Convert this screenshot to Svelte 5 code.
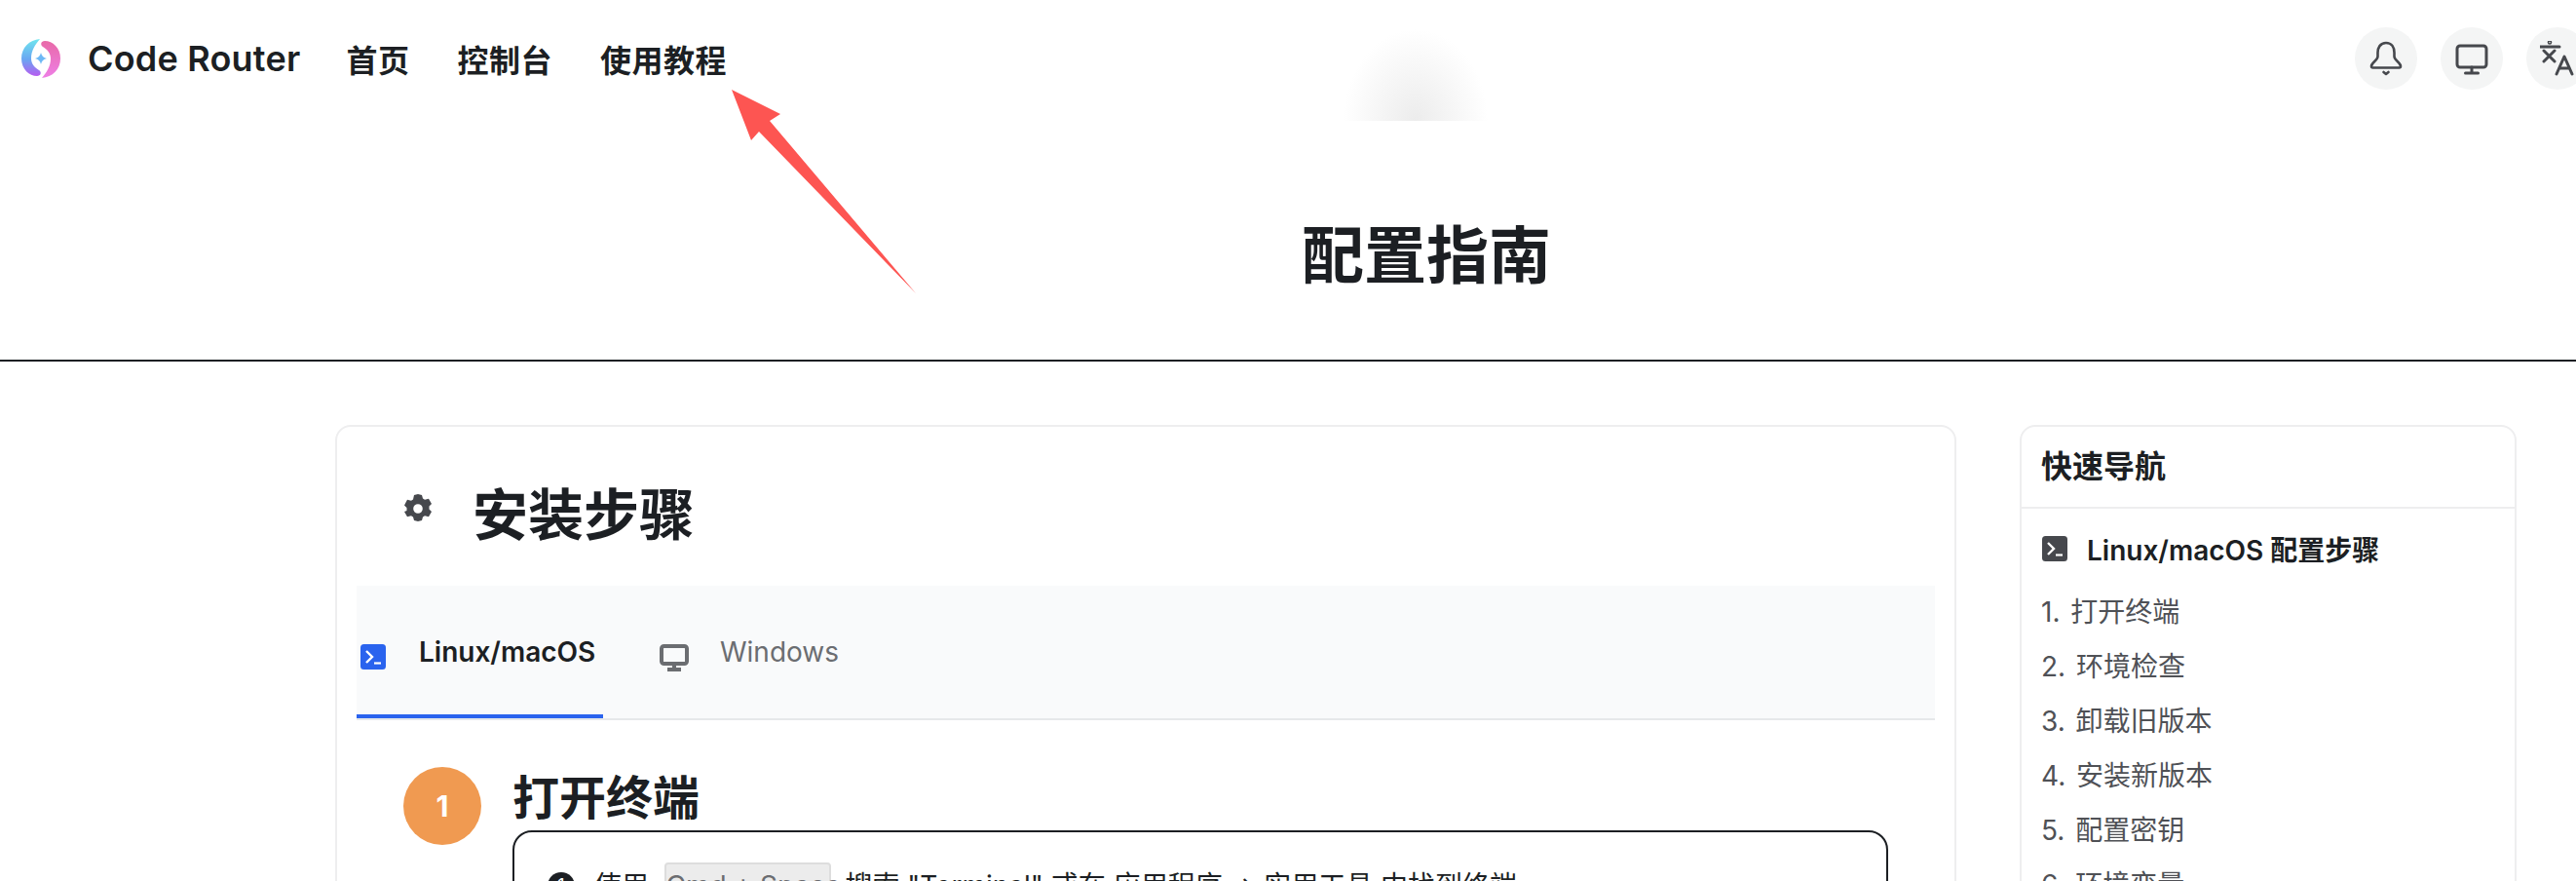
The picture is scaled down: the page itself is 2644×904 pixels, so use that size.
<script lang="ts">
  const nav = ['首页', '控制台', '使用教程'];
  const steps = ['打开终端', '环境检查', '卸载旧版本', '安装新版本', '配置密钥', '环境变量'];
</script>

{#snippet terminal(cls: string)}
  <svg class={cls} viewBox="0 0 26 26">
    <rect width="26" height="26" rx="3.5" fill="currentColor" />
    <path d="M6 7l6 6-6 6" fill="none" stroke="#fff" stroke-width="2.4" />
    <path d="M14 19.5h7" fill="none" stroke="#fff" stroke-width="2.2" />
  </svg>
{/snippet}

<div class="page">
  <header class="topbar">
    <svg class="logo" viewBox="0 0 40 40">
      <defs>
        <linearGradient id="lg-left" x1="0.5" y1="0" x2="0.5" y2="1">
          <stop offset="0" stop-color="#6fe6ee" />
          <stop offset="0.55" stop-color="#6aa6f2" />
          <stop offset="1" stop-color="#b65cf0" />
        </linearGradient>
        <linearGradient id="lg-right" x1="0.5" y1="0" x2="0.5" y2="1">
          <stop offset="0" stop-color="#e86aa8" />
          <stop offset="1" stop-color="#ee7fe6" />
        </linearGradient>
      </defs>
      <path fill="url(#lg-left)" d="M19 0C8 1 0 9 0 20c0 11 8 18 16 18 4 0 5-4 2-6-5-3-8-7-8-12C10 12 14 6 19 0z" />
      <path fill="url(#lg-right)" d="M21 40c11-1 19-9 19-20C40 9 32 2 24 2c-4 0-5 4-2 6 5 3 8 7 8 12 0 8-4 14-9 20z" />
      <path fill="#6db8f5" d="M20 14q1 5 6 6-5 1-6 6-1-5-6-6 5-1 6-6z" />
    </svg>
    <span class="brand">Code Router</span>
    <nav class="nav">
      {#each nav as item}
        <a href="#top">{item}</a>
      {/each}
    </nav>
    <div class="actions">
      <button aria-label="通知">
        <svg width="36" height="36" viewBox="0 0 36 36" fill="none" stroke="currentColor" stroke-width="2.6" stroke-linejoin="round" stroke-linecap="round">
          <path d="M18 2c-6 0-8.500 5-8.500 10v4c0 4-6.500 6-6.500 10 0 1 .5 1.500 1.500 1.500h27c1 0 1.500-.5 1.500-1.500 0-4-6.500-6-6.500-10v-4C26.500 7 24 2 18 2z" />
          <path d="M15.500 32l2.500 2 2.500-2" />
        </svg>
      </button>
      <button aria-label="主题">
        <svg width="36" height="36" viewBox="0 0 36 36" fill="none" stroke="currentColor" stroke-width="3" stroke-linejoin="round" stroke-linecap="round">
          <rect x="3" y="5" width="30" height="22" rx="3" />
          <path d="M18 27v6M11.500 33h13" />
        </svg>
      </button>
      <button aria-label="语言">
        <svg width="36" height="36" viewBox="0 0 36 36" fill="none" stroke="currentColor" stroke-width="3" stroke-linejoin="round" stroke-linecap="round">
          <path d="M0 6h20M4 10l11 11M15 10L4 21" />
          <circle cx="10" cy="1.500" r="0.800" />
          <path d="M17 34l8-18 8 18M20 28h10" />
        </svg>
      </button>
    </div>
  </header>

  <section class="hero">
    <h1>配置指南</h1>
  </section>

  <main class="content">
    <article class="card">
      <div class="card-title">
        <svg class="gear" viewBox="0 0 28 30">
          <path fill-rule="evenodd" fill="currentColor" d="M14 0l4 1 1 3.500 2 1.200 4-1 3 5.300-2.500 2.500v3l2.500 2.500-3 5.300-4-1-2 1.200-1 3.500-4 1-4-1-1-3.500-2-1.200-4 1-3-5.300L2.500 17v-3L0 11.500 3 5.700l4 1 2-1.200L10 1zm0 10.200a4.800 4.800 0 100 9.600 4.800 4.800 0 000-9.600z" />
        </svg>
        <h2>安装步骤</h2>
      </div>

      <div class="tabs">
        <div class="tab active">
          {@render terminal('tab-icon')}
          <span>Linux/macOS</span>
        </div>
        <div class="tab">
          <svg class="tab-icon" viewBox="0 0 30 28" fill="none" stroke="currentColor">
            <rect x="2" y="2" width="26" height="18" rx="2.500" stroke-width="4" />
            <path d="M15 21v4M8 26h14" stroke-width="4" />
          </svg>
          <span>Windows</span>
        </div>
      </div>

      <div class="step">
        <span class="badge">1</span>
        <div class="step-body">
          <h3>打开终端</h3>
          <div class="step-box">
            <p>
              <span class="dot">1</span>
              使用 <kbd>Cmd + Space</kbd> 搜索 "Terminal" 或在 应用程序 → 实用工具 中找到终端
            </p>
          </div>
        </div>
      </div>
    </article>

    <aside class="side">
      <div class="side-head">快速导航</div>
      <div class="side-body">
        <div class="side-sub">
          {@render terminal('side-icon')}
          <span>Linux/macOS 配置步骤</span>
        </div>
        <ol>
          {#each steps as s, i}
            <li>{i + 1}. {s}</li>
          {/each}
        </ol>
      </div>
    </aside>
  </main>

  <!-- redaction smudge and annotation arrow sit over the page -->
  <div class="blob"></div>
  <svg class="arrow" viewBox="0 0 200 220" width="200" height="220">
    <path fill="#fd5552" d="M1 2L51 27 40 34 190 211 29 45 21 54z" />
  </svg>
</div>

<style>
  :global(body) {
    margin: 0;
    background: #fff;
    overflow: hidden;
  }
  .page {
    position: relative;
    width: 2644px;
    height: 904px;
    overflow: hidden;
    font-family: Inter, "Noto Sans CJK SC", sans-serif;
    color: #1c1f23;
  }
  .topbar {
    display: flex;
    align-items: center;
    height: 120px;
    padding-left: 22px;
    margin-right: -13px;
  }
  .logo { width: 40px; height: 40px; flex: none; }
  .brand {
    margin-left: 28px;
    font-size: 36px;
    font-weight: 600;
    letter-spacing: 0.2px;
    white-space: nowrap;
  }
  .nav {
    display: flex;
    gap: 49px;
    margin-left: 47px;
  }
  .nav a {
    font-size: 32px;
    font-weight: 600;
    letter-spacing: 0.5px;
    color: #1c1f23;
    text-decoration: none;
  }
  .actions {
    display: flex;
    gap: 24px;
    margin-left: auto;
  }
  .actions button {
    display: flex;
    align-items: center;
    justify-content: center;
    width: 64px;
    height: 64px;
    padding: 0;
    border: none;
    border-radius: 50%;
    background: #f4f5f5;
    color: #46484d;
  }
  .hero {
    display: flex;
    align-items: flex-start;
    justify-content: center;
    height: 249px;
    padding-left: 284px;
    border-bottom: 2px solid #1c1f23;
  }
  h1 {
    margin: 95px 0 0;
    font-size: 64px;
    line-height: 94px;
    font-weight: 700;
  }
  .content {
    display: flex;
    align-items: flex-start;
    gap: 65px;
    padding: 65px 0 0 344px;
  }
  .card {
    flex: none;
    width: 1664px;
    box-sizing: border-box;
    border: 2px solid #eeeeef;
    border-radius: 16px;
    padding: 0 20px;
  }
  .card-title {
    display: flex;
    align-items: flex-start;
    height: 163px;
    padding-left: 49px;
  }
  .gear {
    width: 28px;
    height: 30px;
    margin-top: 69px;
    color: #46484d;
  }
  h2 {
    margin: 58px 0 0 42px;
    font-size: 57px;
    line-height: 66px;
    font-weight: 700;
  }
  .tabs {
    display: flex;
    height: 136px;
    background: #f9fafb;
    border-bottom: 2px solid #e6e8ea;
  }
  .tab {
    display: flex;
    align-items: flex-start;
    height: 136px;
    box-sizing: border-box;
    padding: 45px 10px 0 4px;
    font-size: 28px;
    line-height: 46px;
    color: #6b6d71;
  }
  .tab + .tab { padding-left: 58px; }
  .tab.active {
    width: 253px;
    color: #1c1f23;
    font-weight: 600;
    border-bottom: 4px solid #2a63ee;
  }
  .tab span { margin-left: 34px; white-space: nowrap; }
  .tab-icon {
    width: 26px;
    height: 26px;
    flex: none;
    margin-top: 15px;
    color: #2a63ee;
  }
  .tab:not(.active) .tab-icon { width: 30px; height: 28px; color: #6b6d71; }
  .tab:not(.active) span { margin-left: 32px; }
  .step {
    display: flex;
    padding: 48px 0 0 48px;
  }
  .badge {
    flex: none;
    display: flex;
    align-items: center;
    justify-content: center;
    width: 80px;
    height: 80px;
    border-radius: 50%;
    background: #f09a51;
    color: #fff;
    font-size: 30px;
    font-weight: 700;
  }
  .step-body { margin-left: 32px; width: 1412px; }
  h3 {
    margin: 0;
    font-size: 48px;
    line-height: 64px;
    font-weight: 700;
  }
  .step-box {
    margin-top: 1px;
    border: 2px solid #1c1f23;
    border-radius: 20px;
    padding: 31px 34px 30px;
  }
  .step-box p {
    margin: 0;
    display: flex;
    align-items: center;
    gap: 0.35em;
    font-size: 28px;
    line-height: 44px;
    white-space: nowrap;
  }
  .dot {
    flex: none;
    display: inline-flex;
    align-items: center;
    justify-content: center;
    width: 28px;
    height: 28px;
    margin-right: 10px;
    border-radius: 50%;
    background: #1c1f23;
    color: #fff;
    font-size: 18px;
  }
  kbd {
    display: inline-block;
    width: 171px;
    box-sizing: border-box;
    margin: 0 5px 0 6px;
    border: 2px solid #ddd;
    border-radius: 4px;
    background: #ececec;
    color: #6b6d71;
    font: inherit;
    text-align: center;
  }
  .side {
    flex: none;
    width: 510px;
    box-sizing: border-box;
    border: 2px solid #eeeeef;
    border-radius: 16px;
  }
  .side-head {
    height: 84px;
    box-sizing: border-box;
    padding: 20px 20px 0;
    font-size: 32px;
    line-height: 42px;
    font-weight: 600;
    border-bottom: 2px solid #eeeeef;
  }
  .side-body { padding: 26px 20px 0; }
  .side-sub {
    display: flex;
    align-items: center;
    gap: 20px;
    font-size: 28px;
    font-weight: 600;
    height: 30px;
  }
  .side-icon { width: 26px; height: 28px; color: #46484d; flex: none; margin-left: 1px; }
  ol {
    margin: 22px 0 0;
    padding: 0;
    list-style: none;
  }
  li {
    height: 56px;
    line-height: 56px;
    font-size: 28px;
    color: #4f5156;
    word-spacing: 3px;
  }
  .blob {
    position: absolute;
    left: 1378px;
    top: 30px;
    width: 150px;
    height: 94px;
    background: radial-gradient(ellipse 74px 94px at 50% 100%, #ececec, #ffffff);
  }
  .arrow {
    position: absolute;
    left: 750px;
    top: 90px;
  }
</style>
